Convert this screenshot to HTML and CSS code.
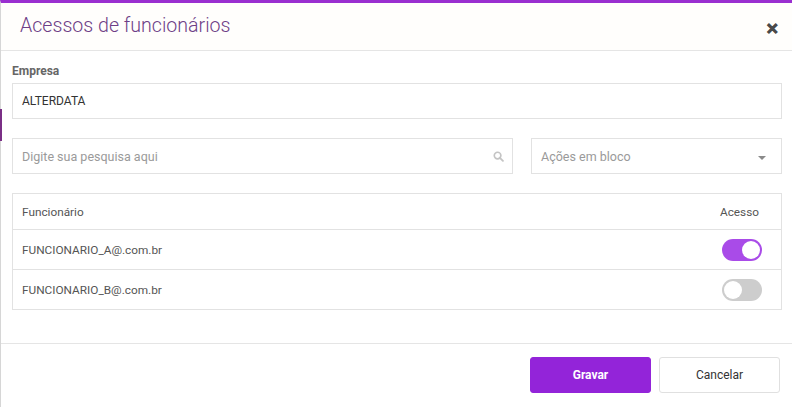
FILE: index.html
```html
<!DOCTYPE html>
<html lang="pt-BR">
<head>
	<meta charset="UTF-8">
	<title>Acessos de funcionários</title>
	<link rel="stylesheet" href="styles.css">
</head>
<body>
	<div class="modal">
		<div class="side-mark"></div>
		<div class="modal-header">
			<h1 class="modal-title">Acessos de funcionários</h1>
			<span class="close">&#x2715;</span>
		</div>

		<div class="modal-body">
			<label class="label">Empresa</label>
			<div class="field">ALTERDATA</div>

			<div class="filters">
				<div class="field search">
					<span class="placeholder">Digite sua pesquisa aqui</span>
					<svg class="search-icon" width="11" height="11" viewBox="0 0 12 12">
						<circle cx="5" cy="5" r="3.6" fill="none" stroke="#c4c4c4" stroke-width="1.8"/>
						<line x1="7.6" y1="7.6" x2="10.8" y2="10.8" stroke="#c4c4c4" stroke-width="2" stroke-linecap="round"/>
					</svg>
				</div>
				<div class="field select">
					<span class="placeholder">Ações em bloco</span>
					<span class="caret"></span>
				</div>
			</div>

			<div class="table">
				<div class="row head">
					<span>Funcionário</span>
					<span class="col-access">Acesso</span>
				</div>
				<div class="row">
					<span>FUNCIONARIO_A@.com.br</span>
					<span class="toggle on"></span>
				</div>
				<div class="row">
					<span>FUNCIONARIO_B@.com.br</span>
					<span class="toggle"></span>
				</div>
			</div>
		</div>

		<div class="modal-footer">
			<button class="btn primary">Gravar</button>
			<button class="btn">Cancelar</button>
		</div>
	</div>
</body>
</html>
```

FILE: styles.css
```css
*{
	box-sizing: border-box;
	margin: 0;
	padding: 0;
}
html, body{
	height: 100%;
}
body{
	font-family: Roboto, "Liberation Sans", sans-serif;
	background: #fff;
	color: #333;
	overflow: hidden;
}
.modal{
	position: relative;
	height: 100%;
	border-top: 3px solid #9a2fd0;
	border-left: 1px solid #d6d6d6;
}
.side-mark{
	position: absolute;
	left: -1px;
	top: 106px;
	width: 2px;
	height: 32px;
	background: #7a2f86;
}
.modal-header{
	display: flex;
	align-items: center;
	justify-content: space-between;
	height: 48px;
	padding: 0 13px 0 19px;
	border-bottom: 1px solid #e5e5e5;
	background: #fffefc;
}
.modal-title{
	font-size: 19.6px;
	font-weight: 300;
	color: #6e3f87;
	margin-top: -3px;
}
.close{
	font-size: 15px;
	font-weight: bold;
	color: #4a4a4a;
	margin-top: 4px;
	-webkit-text-stroke: 1px #4a4a4a;
}
.modal-body{
	padding: 13px 10px 0 11px;
	height: 293px;
	border-bottom: 1px solid #e5e5e5;
}
.label{
	display: block;
	font-size: 12px;
	font-weight: bold;
	color: #666;
	margin-bottom: 5px;
}
.field{
	display: flex;
	align-items: center;
	height: 36px;
	padding: 0 9px;
	border: 1px solid #e2e2e2;
	font-size: 12px;
	color: #333;
}
.filters{
	display: flex;
	gap: 18px;
	margin-top: 19px;
}
.search{
	width: 501px;
	justify-content: space-between;
	padding-right: 8px;
}
.select{
	flex: 1;
	justify-content: space-between;
	padding-right: 15px;
}
.placeholder{
	color: #9a9a9a;
	font-size: 12.5px;
}
.search-icon{
	margin-top: 1px;
}
.caret{
	width: 0;
	height: 0;
	border-left: 4px solid transparent;
	border-right: 4px solid transparent;
	border-top: 4px solid #8a8a8a;
	margin-top: 3px;
}
.table{
	margin-top: 19px;
	border: 1px solid #e2e2e2;
}
.row{
	display: flex;
	align-items: center;
	justify-content: space-between;
	height: 40px;
	padding: 0 19px 0 9px;
	border-top: 1px solid #e2e2e2;
	font-size: 11.8px;
	color: #555;
}
.row.head{
	height: 35px;
	border-top: none;
	color: #555;
}
.col-access{
	margin-right: 3px;
}
.toggle{
	position: relative;
	width: 40px;
	height: 22px;
	border-radius: 11px;
	background: #cdcdcd;
}
.toggle:after{
	content: '';
	position: absolute;
	top: 2px;
	left: 2px;
	width: 18px;
	height: 18px;
	border-radius: 50%;
	background: #fff;
}
.toggle.on{
	background: #a94be8;
}
.toggle.on:after{
	left: 20px;
}
.modal-footer{
	display: flex;
	justify-content: flex-end;
	gap: 8px;
	padding: 13px 12px 0 0;
}
.btn{
	width: 121px;
	height: 36px;
	border: 1px solid #e0e0e0;
	border-radius: 3px;
	background: #fff;
	font-family: Roboto, "Liberation Sans", sans-serif;
	font-size: 12px;
	color: #333;
}
.btn.primary{
	border-color: #9324d9;
	background: #9324d9;
	color: #fff;
	font-weight: bold;
}
```
